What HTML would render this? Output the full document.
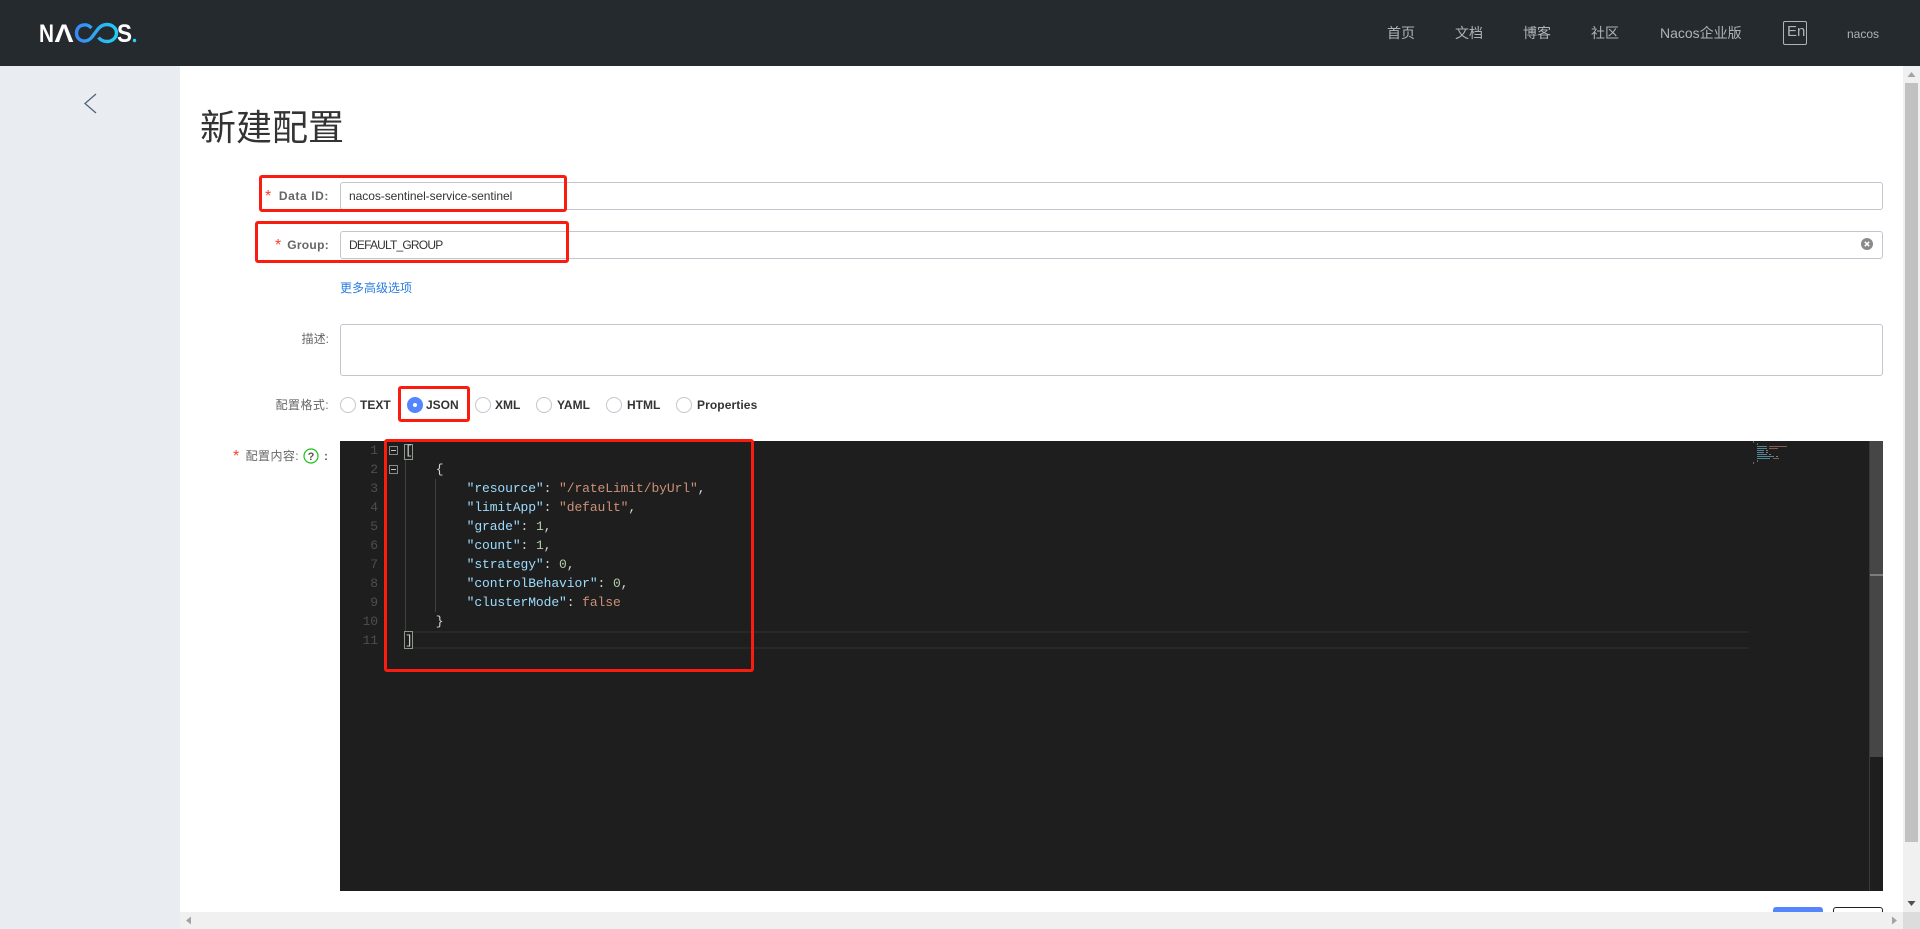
<!DOCTYPE html>
<html lang="zh">
<head>
<meta charset="utf-8">
<title>Nacos</title>
<style>
html,body{margin:0;padding:0;width:1920px;height:929px;overflow:hidden;background:#fff;font-family:"Liberation Sans","Noto Sans CJK SC",sans-serif;}
div,span,a{position:absolute;box-sizing:border-box;white-space:nowrap;}
.nav{top:22px;height:22px;line-height:22px;font-size:14px;color:#b0b3b5;}
.inp{left:340px;width:1543px;height:28px;border:1px solid #c4c6cf;border-radius:3px;background:#fff;}
.val{left:349px;height:28px;line-height:28px;font-size:12px;color:#333;letter-spacing:-.05px;}
.lb{font-size:12px;color:#666;height:20px;line-height:20px;text-align:right;}
.lbb{font-weight:bold;}
.st{color:#fa4030;font-size:16px;height:24px;line-height:24px;font-weight:normal;}
.red{border:3px solid #fb1c10;border-radius:3px;}
.r{top:397px;width:16px;height:16px;border:1px solid #c4c6cf;border-radius:50%;background:#fff;}
.rt{top:395px;height:20px;line-height:20px;font-size:12px;font-weight:bold;color:#333;}
.ln{left:340px;width:38px;height:19px;line-height:19px;text-align:right;font:13px/19px "Liberation Mono",monospace;color:#4e4e4e;letter-spacing:-.1px;}
.c{left:405px;height:19px;font:13px/19px "Liberation Mono",monospace;letter-spacing:-.1px;color:#d4d4d4;white-space:pre;}
.k{position:static;color:#9cdcfe}.s{position:static;color:#ce9178}.n{position:static;color:#b5cea8}
.fold{left:389px;width:9px;height:9px;border:1px solid #8a8a8a;}
.fold:after{content:"";position:absolute;left:1px;top:3px;width:5px;height:1px;background:#c5c5c5;}
.br{left:404px;width:9px;border:1px solid #8b9a8b;}
</style>
</head>
<body>
<!-- header -->
<div style="left:0;top:0;width:1920px;height:66px;background:#252a2f;"></div>
<svg style="position:absolute;left:0;top:0" width="150" height="66" viewBox="0 0 150 66">
<defs><linearGradient id="g" x1="76" x2="118" y1="0" y2="0" gradientUnits="userSpaceOnUse"><stop offset="0" stop-color="#3a86f7"/><stop offset="1" stop-color="#1fd3f3"/></linearGradient></defs>
<text x="39" y="42" font-family="Liberation Sans" font-weight="bold" font-size="25" fill="#fff" textLength="15" lengthAdjust="spacingAndGlyphs">N</text>
<text x="54.500" y="42" font-family="Liberation Sans" font-weight="bold" font-size="25" fill="#fff" textLength="19" lengthAdjust="spacingAndGlyphs">Λ</text>
<path d="M91.500 28C89 25.500 86 24.500 83.500 25C79 25.500 76.500 29 76.500 33C76.500 37 79 40.500 83.500 41C87 41.300 90 39.500 92 37L98 29C100.500 26 103.500 24.500 107 24.500C112.500 24.500 116.500 28.500 116.500 33C116.500 37.500 112.500 41.500 107 41.500C103.500 41.500 100.500 40 98.500 37.500" fill="none" stroke="url(#g)" stroke-width="3.400"/>
<text x="117" y="42" font-family="Liberation Sans" font-weight="bold" font-size="25" fill="#fff" textLength="15" lengthAdjust="spacingAndGlyphs">S</text>
<circle cx="134.500" cy="40.500" r="1.700" fill="#2bd4ee"/>
</svg>
<span class="nav" style="left:1387px">首页</span>
<span class="nav" style="left:1455px">文档</span>
<span class="nav" style="left:1523px">博客</span>
<span class="nav" style="left:1591px">社区</span>
<span class="nav" style="left:1660px">Nacos企业版</span>
<div style="left:1783px;top:21px;width:24px;height:24px;border:1px solid #b0b3b5;border-radius:2px;"></div>
<span class="nav" style="left:1787px;top:21px;font-size:15px">En</span>
<span class="nav" style="left:1847px;top:23px;font-size:12px">nacos</span>

<!-- sidebar -->
<div style="left:0;top:66px;width:180px;height:863px;background:#e9ecf1;"></div>
<svg style="position:absolute;left:80px;top:90px" width="20" height="28"><path d="M16 4L5 13.500L16 23" fill="none" stroke="#546478" stroke-width="1.300"/></svg>

<!-- title -->
<span style="left:200px;top:102px;height:52px;line-height:52px;font-size:36px;color:#333;">新建配置</span>

<!-- fields -->
<div class="inp" style="top:182px"></div>
<span class="val" style="top:182px">nacos-sentinel-service-sentinel</span>
<span class="st" style="left:265px;top:185px">*</span>
<span class="lb lbb" style="left:276px;top:186px;width:53px;letter-spacing:.6px">Data ID:</span>

<div class="inp" style="top:231px"></div>
<span class="val" style="top:231px;letter-spacing:-.8px">DEFAULT_GROUP</span>
<span class="st" style="left:275px;top:234px">*</span>
<span class="lb lbb" style="left:286px;top:235px;width:43px;letter-spacing:.3px">Group:</span>
<svg style="position:absolute;left:1861px;top:238px" width="12" height="12"><circle cx="6" cy="6" r="6" fill="#8a8a8a"/><path d="M3.800 3.800L8.200 8.200M8.200 3.800L3.800 8.200" stroke="#fff" stroke-width="1.500"/></svg>

<span style="left:340px;top:278px;height:20px;line-height:20px;font-size:12px;color:#2b7de0;">更多高级选项</span>

<span class="lb" style="left:299px;top:329px;width:30px">描述:</span>
<div class="inp" style="top:324px;height:52px"></div>

<span class="lb" style="left:268px;top:395px;width:61px;letter-spacing:.4px">配置格式:</span>
<div class="r" style="left:340px"></div><span class="rt" style="left:360px">TEXT</span>
<div class="r" style="left:407px;background:#5584ff;border-color:#5584ff"></div>
<div style="left:413px;top:403px;width:4px;height:4px;border-radius:50%;background:#fff"></div>
<span class="rt" style="left:426px">JSON</span>
<div class="r" style="left:475px"></div><span class="rt" style="left:495px">XML</span>
<div class="r" style="left:536px"></div><span class="rt" style="left:557px">YAML</span>
<div class="r" style="left:606px"></div><span class="rt" style="left:627px">HTML</span>
<div class="r" style="left:676px"></div><span class="rt" style="left:697px;letter-spacing:.1px">Properties</span>

<span class="st" style="left:233px;top:445px">*</span>
<span class="lb" style="left:243px;top:446px;width:56px;letter-spacing:.4px">配置内容:</span>
<svg style="position:absolute;left:303px;top:448px" width="16" height="16"><circle cx="8" cy="8" r="7" fill="#fff" stroke="#1dc11d" stroke-width="1.200"/><text x="8" y="12" text-anchor="middle" font-family="Liberation Sans" font-size="11" font-weight="bold" fill="#555">?</text></svg>
<span class="lb lbb" style="left:320px;top:446px;width:8px;">:</span>

<!-- editor -->
<div style="left:340px;top:441px;width:1543px;height:450px;background:#1e1e1e;"></div>
<div style="left:412px;top:631px;width:1337px;height:18px;border-top:2px solid #282828;border-bottom:2px solid #282828;"></div>
<div style="left:405px;top:460px;width:1px;height:171px;background:#404040;"></div>
<div style="left:435px;top:479px;width:1px;height:133px;background:#404040;"></div>
<div class="br" style="top:444px;height:16px"></div>
<div class="br" style="top:631px;height:18px"></div>
<div class="fold" style="top:446px"></div>
<div class="fold" style="top:465px"></div>

<span class="ln" style="top:441px">1</span>
<span class="ln" style="top:460px">2</span>
<span class="ln" style="top:479px">3</span>
<span class="ln" style="top:498px">4</span>
<span class="ln" style="top:517px">5</span>
<span class="ln" style="top:536px">6</span>
<span class="ln" style="top:555px">7</span>
<span class="ln" style="top:574px">8</span>
<span class="ln" style="top:593px">9</span>
<span class="ln" style="top:612px">10</span>
<span class="ln" style="top:631px">11</span>

<div class="c" style="top:441px">[</div>
<div class="c" style="top:460px">    {</div>
<div class="c" style="top:479px">        <span class="k">"resource"</span>: <span class="s">"/rateLimit/byUrl"</span>,</div>
<div class="c" style="top:498px">        <span class="k">"limitApp"</span>: <span class="s">"default"</span>,</div>
<div class="c" style="top:517px">        <span class="k">"grade"</span>: <span class="n">1</span>,</div>
<div class="c" style="top:536px">        <span class="k">"count"</span>: <span class="n">1</span>,</div>
<div class="c" style="top:555px">        <span class="k">"strategy"</span>: <span class="n">0</span>,</div>
<div class="c" style="top:574px">        <span class="k">"controlBehavior"</span>: <span class="n">0</span>,</div>
<div class="c" style="top:593px">        <span class="k">"clusterMode"</span>: <span class="s">false</span></div>
<div class="c" style="top:612px">    }</div>
<div class="c" style="top:631px">]</div>

<!-- minimap -->
<svg style="position:absolute;left:1753px;top:441px" width="50" height="24" opacity=".85">
<rect x="0" y="0" width="1" height="2" fill="#777"/><rect x="4" y="2" width="1" height="2" fill="#777"/>
<g fill="#5e97ad"><rect x="4" y="5" width="10" height="1"/><rect x="4" y="7" width="10" height="1"/><rect x="4" y="9" width="7" height="1"/><rect x="4" y="11" width="7" height="1"/><rect x="4" y="13" width="10" height="1"/><rect x="4" y="15" width="17" height="1"/><rect x="4" y="17" width="13" height="1"/></g>
<g fill="#96695a"><rect x="16" y="5" width="18" height="1"/><rect x="16" y="7" width="9" height="1"/><rect x="20" y="17" width="6" height="1"/></g>
<g fill="#8a9a80"><rect x="13" y="9" width="2" height="1"/><rect x="13" y="11" width="2" height="1"/><rect x="16" y="13" width="2" height="1"/><rect x="23" y="15" width="2" height="1"/></g>
<rect x="4" y="19" width="1" height="2" fill="#777"/><rect x="0" y="21" width="1" height="2" fill="#777"/>
</svg>

<!-- editor scrollbar -->
<div style="left:1869px;top:441px;width:14px;height:450px;background:#1e1e1e;border-left:1px solid #3a3a3a;"></div>
<div style="left:1870px;top:441px;width:13px;height:316px;background:#464646;"></div>
<div style="left:1870px;top:574px;width:13px;height:2px;background:#7d7d7d;"></div>

<!-- red annotation boxes -->
<div class="red" style="left:259px;top:175px;width:308px;height:37px"></div>
<div class="red" style="left:255px;top:221px;width:314px;height:42px"></div>
<div class="red" style="left:398px;top:386px;width:72px;height:36px"></div>
<div class="red" style="left:384px;top:439px;width:370px;height:233px"></div>

<!-- buttons -->
<div style="left:1773px;top:907px;width:50px;height:10px;background:#5584ff;border-radius:3px 3px 0 0;"></div>
<div style="left:1833px;top:907px;width:50px;height:10px;background:#fff;border:1px solid #222;border-radius:3px 3px 0 0;"></div>

<!-- page scrollbars -->
<div style="left:180px;top:912px;width:1723px;height:17px;background:#f0f0f0;"></div>
<div style="left:1903px;top:66px;width:17px;height:846px;background:#f0f0f0;"></div>
<div style="left:1903px;top:912px;width:17px;height:17px;background:#dcdcdc;"></div>
<div style="left:1905px;top:83px;width:13px;height:759px;background:#c1c1c1;"></div>
<svg style="position:absolute;left:1903px;top:66px" width="17" height="17"><path d="M8.500 6L12.500 11H4.500Z" fill="#a3a3a3"/></svg>
<svg style="position:absolute;left:1903px;top:895px" width="17" height="17"><path d="M8.500 11L4.500 6H12.500Z" fill="#505050"/></svg>
<svg style="position:absolute;left:180px;top:912px" width="17" height="17"><path d="M6 8.500L11 4.500V12.500Z" fill="#a3a3a3"/></svg>
<svg style="position:absolute;left:1886px;top:912px" width="17" height="17"><path d="M11 8.500L6 4.500V12.500Z" fill="#a3a3a3"/></svg>
</body>
</html>
